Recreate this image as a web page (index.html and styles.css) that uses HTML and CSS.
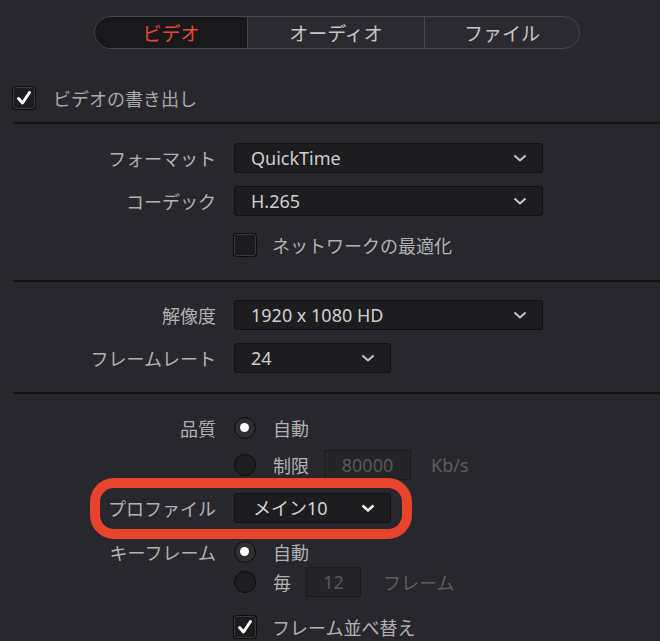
FILE: index.html
```html
<!DOCTYPE html>
<html lang="ja">
<head>
    <meta charset="UTF-8">
    <meta name="viewport" content="width=device-width, initial-scale=1.0">
    <title>ビデオ書き出し設定</title>
    <link rel="stylesheet" href="styles.css">
</head>
<body>
    <div class="tabs">
        <div class="tab active">ビデオ</div>
        <div class="tab tab-audio">オーディオ</div>
        <div class="tab tab-file">ファイル</div>
    </div>

    <div class="export-row">
        <span class="checkbox checked">
            <svg width="18" height="18" viewBox="0 0 18 18"><path d="M3.5 9.5 L7.5 14 L14.5 3.5" fill="none" stroke="#fff" stroke-width="3" stroke-linecap="round" stroke-linejoin="round"/></svg>
        </span>
        <span class="export-label">ビデオの書き出し</span>
    </div>
    <div class="divider"></div>

    <div class="section s-format">
        <div class="row">
            <span class="label">フォーマット</span>
            <div class="select wide"><span>QuickTime</span><svg class="chev" width="14" height="8" viewBox="0 0 14 8"><polyline points="1.5,1.5 7,6.5 12.5,1.5" fill="none" stroke="#c8c8ca" stroke-width="2"/></svg></div>
        </div>
        <div class="row r-codec">
            <span class="label">コーデック</span>
            <div class="select wide"><span>H.265</span><svg class="chev" width="14" height="8" viewBox="0 0 14 8"><polyline points="1.5,1.5 7,6.5 12.5,1.5" fill="none" stroke="#c8c8ca" stroke-width="2"/></svg></div>
        </div>
        <div class="row r-network">
            <span class="label"></span>
            <div class="inline">
                <span class="checkbox"></span>
                <span class="opt">ネットワークの最適化</span>
            </div>
        </div>
    </div>
    <div class="divider d-two"></div>

    <div class="section s-res">
        <div class="row">
            <span class="label">解像度</span>
            <div class="select wide"><span>1920 x 1080 HD</span><svg class="chev" width="14" height="8" viewBox="0 0 14 8"><polyline points="1.5,1.5 7,6.5 12.5,1.5" fill="none" stroke="#c8c8ca" stroke-width="2"/></svg></div>
        </div>
        <div class="row r-rate">
            <span class="label">フレームレート</span>
            <div class="select narrow"><span>24</span><svg class="chev" width="14" height="8" viewBox="0 0 14 8"><polyline points="1.5,1.5 7,6.5 12.5,1.5" fill="none" stroke="#c8c8ca" stroke-width="2"/></svg></div>
        </div>
    </div>
    <div class="divider d-three"></div>

    <div class="section s-quality">
        <div class="row r-quality">
            <span class="label">品質</span>
            <div class="inline">
                <span class="radio on"></span>
                <span class="opt">自動</span>
            </div>
        </div>
        <div class="row r-limit">
            <span class="label"></span>
            <div class="inline">
                <span class="radio"></span>
                <span class="opt">制限</span>
                <span class="field f-rate">80000</span>
                <span class="unit unit-kbs">Kb/s</span>
            </div>
        </div>
        <div class="row r-profile">
            <span class="label">プロファイル</span>
            <div class="select profile"><span>メイン10</span><svg class="chev" width="14" height="8" viewBox="0 0 14 8"><polyline points="1.5,1.5 7,6.5 12.5,1.5" fill="none" stroke="#f2f2f2" stroke-width="2.4"/></svg></div>
            <span class="highlight"></span>
        </div>
        <div class="row r-key">
            <span class="label">キーフレーム</span>
            <div class="inline">
                <span class="radio on"></span>
                <span class="opt">自動</span>
            </div>
        </div>
        <div class="row">
            <span class="label"></span>
            <div class="inline">
                <span class="radio"></span>
                <span class="opt">毎</span>
                <span class="field f-frames">12</span>
                <span class="unit unit-frame">フレーム</span>
            </div>
        </div>
        <div class="row r-reorder">
            <span class="label"></span>
            <div class="inline">
                <span class="checkbox checked">
                    <svg width="18" height="18" viewBox="0 0 18 18"><path d="M3.5 9.5 L7.5 14 L14.5 3.5" fill="none" stroke="#fff" stroke-width="3" stroke-linecap="round" stroke-linejoin="round"/></svg>
                </span>
                <span class="opt">フレーム並べ替え</span>
            </div>
        </div>
    </div>
</body>
</html>
```

FILE: styles.css
```css
body {
    margin: 0;
    padding: 16px 0 0 13px;
    height: 641px;
    box-sizing: border-box;
    overflow: hidden;
    background-color: #28272d;
    font-family: 'Noto Sans', 'Noto Sans CJK JP', sans-serif;
    font-size: 18px;
    color: #b2b2b4;
}

.tabs {
    display: flex;
    width: 486px;
    height: 33px;
    margin-left: 81px;
    box-sizing: border-box;
    border: 1.5px solid #48474d;
    border-radius: 17px;
    overflow: hidden;
    background-color: #2b2a30;
}

.tab {
    display: flex;
    justify-content: center;
    align-items: center;
    width: 155px;
    font-family: 'Noto Sans CJK JP', sans-serif;
    font-size: 19px;
    color: #c6c6c8;
    line-height: 1;
}

.tab.active {
    width: 152px;
    background-color: #19191b;
    color: #e8473a;
}

.tab-audio {
    width: 176px;
    border-left: 1.5px solid #48474d;
    border-right: 1.5px solid #48474d;
}

.tab-file {
    flex: 1;
}

.export-row {
    display: flex;
    align-items: center;
    height: 22px;
    margin-top: 38px;
}

.export-label {
    margin-left: 18px;
    font-family: 'Noto Sans CJK JP', sans-serif;
    color: #a9a9ab;
    line-height: 1;
}

.divider {
    height: 2px;
    margin-top: 13px;
    background-color: #141416;
}

.d-two {
    margin-top: 22px;
}

.d-three {
    margin-top: 19px;
}

.section {
    margin-top: 19px;
}

.s-res {
    margin-top: 18px;
}

.s-quality {
    margin-top: 19px;
}

.row {
    display: grid;
    grid-template-columns: 203px auto;
    column-gap: 18px;
    align-items: center;
    height: 30px;
}

.r-codec {
    margin-top: 13px;
}

.r-network {
    margin-top: 16px;
    height: 26px;
}

.r-rate {
    margin-top: 13px;
}

.r-limit {
    margin-top: 7px;
}

.r-profile {
    position: relative;
    margin-top: 13px;
}

.r-key {
    margin-top: 14px;
}

.r-reorder {
    margin-top: 15px;
}

.label {
    text-align: right;
    font-family: 'Noto Sans CJK JP', sans-serif;
    line-height: 1;
}

.select {
    display: flex;
    justify-content: space-between;
    align-items: center;
    height: 30px;
    box-sizing: border-box;
    padding: 0 15px 0 16px;
    background-color: #1d1d1f;
    border: 1px solid #111113;
    border-radius: 3px;
    color: #cfcfd1;
    line-height: 1;
}

.wide {
    width: 309px;
}

.narrow {
    width: 157px;
}

.profile {
    width: 157px;
    padding-left: 18px;
    color: #d4d4d6;
}

.inline {
    display: flex;
    align-items: center;
}

.checkbox {
    display: flex;
    justify-content: center;
    align-items: center;
    width: 22px;
    height: 22px;
    box-sizing: border-box;
    background-color: #1c1c1e;
    border: 1px solid #3a3a3d;
    border-radius: 3px;
    box-shadow: 0 0 0 1px #0e0e10;
}

.radio {
    position: relative;
    width: 22px;
    height: 22px;
    box-sizing: border-box;
    background-color: #1f1f21;
    border: 1.5px solid #0c0c0e;
    border-radius: 50%;
}

.radio.on {
    background-color: #2e2e31;
}

.radio.on::after {
    content: '';
    position: absolute;
    left: 5px;
    top: 5px;
    width: 9px;
    height: 9px;
    background-color: #fff;
    border-radius: 50%;
}

.opt {
    margin-left: 17px;
    font-family: 'Noto Sans CJK JP', sans-serif;
    line-height: 1;
}

.r-network .opt,
.r-reorder .opt {
    margin-left: 16px;
}

.field {
    display: flex;
    justify-content: center;
    align-items: center;
    height: 30px;
    box-sizing: border-box;
    margin-left: 15px;
    background-color: #252428;
    border: 1px solid #1a1a1c;
    border-radius: 2px;
    color: #58585b;
    line-height: 1;
}

.f-rate {
    width: 87px;
}

.f-frames {
    width: 55px;
}

.unit {
    color: #5e5e61;
    line-height: 1;
}

.unit-kbs {
    margin-left: 20px;
}

.unit-frame {
    margin-left: 22px;
    font-family: 'Noto Sans CJK JP', sans-serif;
}

.highlight {
    position: absolute;
    left: 77px;
    top: -15px;
    width: 322px;
    height: 61px;
    box-sizing: border-box;
    border: 10px solid #e8432d;
    border-radius: 24px;
    pointer-events: none;
}
```
